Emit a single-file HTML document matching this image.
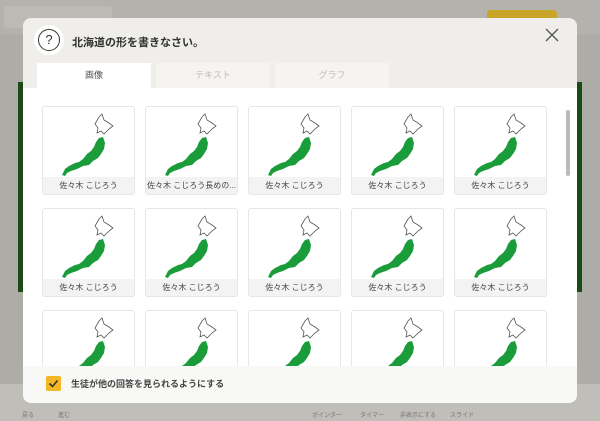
<!DOCTYPE html>
<html><head><meta charset="utf-8"><style>
*{margin:0;padding:0;box-sizing:border-box}
body{width:600px;height:421px;overflow:hidden;background:#adaca6;font-family:"Liberation Sans","Noto Sans CJK JP",sans-serif;position:relative}
.top{position:absolute;left:0;top:0;width:600px;height:34px;background:#b3b2ad}
.crumb{position:absolute;left:4px;top:6px;width:108px;height:22px;background:#bbbab5;border-radius:3px}
.yb{position:absolute;left:487px;top:10px;width:70px;height:20px;background:#c9a52a;border-radius:3px}
.gl{position:absolute;left:18px;top:82px;width:5px;height:210px;background:#1c4a17}
.gr{position:absolute;left:577px;top:82px;width:5px;height:210px;background:#1c4a17}
.bot{position:absolute;left:0;top:384px;width:600px;height:37px;background:#bfbeb9;font-size:6px;color:#777}
.modal{position:absolute;left:23px;top:18px;width:554px;height:385px;background:#efeeeb;border-radius:8px;overflow:hidden}
.q{position:absolute;left:15px;top:11px;width:22px;height:22px;border:1.5px solid #333;border-radius:50%;font-size:13px;text-align:center;line-height:19px;color:#333;background:#fff;box-shadow:0 0 0 4px #fff}
.title{position:absolute;left:49px;top:16px;font-size:11px;font-weight:bold;color:#333}
.x{position:absolute;left:522px;top:10px}
.tab{position:absolute;top:45px;width:114px;height:25px;background:#f5f4f1;font-size:9px;color:#bbb;text-align:center;line-height:25px}
.content{position:absolute;left:0;top:70px;width:554px;height:278px;background:#fff}
.card{position:absolute;width:93px;height:89px;border:1px solid #e6e6e6;border-radius:3px;background:#fff;overflow:hidden}
.card svg{position:absolute;left:0;top:0}
.lab{position:absolute;left:0;bottom:0;width:100%;height:17px;background:#f3f3f3;font-size:8px;color:#444;text-align:center;line-height:17px;white-space:nowrap}
.sb{position:absolute;left:543px;top:22px;width:4px;height:66px;background:#bbb;border-radius:2px}
.foot{position:absolute;left:0;top:348px;width:554px;height:37px;background:#f8f8f6}
.cb{position:absolute;left:23px;top:10px;width:15px;height:15px;background:#f2b722;border-radius:2px}
.ft{position:absolute;left:48px;top:11px;font-size:9px;font-weight:bold;color:#444}
</style></head><body>
<div class="top"><div class="crumb"></div><div class="yb"></div></div>
<div class="gl"></div><div class="gr"></div>
<div class="bot"><span style="position:absolute;left:22px;top:26px">戻る</span><span style="position:absolute;left:58px;top:26px">進む</span><span style="position:absolute;left:312px;top:26px">ポインター</span><span style="position:absolute;left:360px;top:26px">タイマー</span><span style="position:absolute;left:400px;top:26px">非表示にする</span><span style="position:absolute;left:450px;top:26px">スライド</span></div>
<div class="modal">
<div class="q">?</div>
<div class="title">北海道の形を書きなさい。</div>
<div class="x"><svg width="14" height="14"><path d="M1 1L13 13M13 1L1 13" stroke="#555" stroke-width="1.3"/></svg></div>
<div class="tab" style="left:14px;background:#fff;color:#555">画像</div>
<div class="tab" style="left:133px">テキスト</div>
<div class="tab" style="left:252px">グラフ</div>
<div class="content" id="c"><div class="sb"></div></div>
<div class="foot"><div class="cb"><svg width="15" height="15"><path d="M3.5 7.5l3 3 5-6" stroke="#333" stroke-width="1.6" fill="none"/></svg></div><div class="ft">生徒が他の回答を見られるようにする</div></div>
</div>
<script>
var m='<svg width="93" height="72" viewBox="0 0 93 72"><path d="M56 10L59 7L61 13L66 16L70 19L66 22L61 27L58 24L54 26L55 21L52 17Z" fill="#fff" stroke="#555" stroke-width="0.8"/><path d="M56 31L60 30L62 36L61 42L58 47L55 51L50 54L46 58L40 59L34 62L28 64L24 66L22 69L19 68L22 62L26 59L32 56L36 55L40 52L44 47L48 44L51 40L53 35Z" fill="#1a9c3a"/><path d="M18 70L23 70L21 75L17 74Z" fill="#1a9c3a"/></svg>';
var c=document.getElementById('c'),h='';
var xs=[19,122,225,328,431],ys=[18,120,222];
for(var r=0;r<3;r++)for(var i=0;i<5;i++){var t=(r==0&&i==1)?'佐々木 こじろう長めの...':'佐々木 こじろう';h+='<div class="card" style="left:'+xs[i]+'px;top:'+ys[r]+'px">'+m+'<div class="lab">'+t+'</div></div>';}
c.insertAdjacentHTML('beforeend',h);
</script>
</body></html>
